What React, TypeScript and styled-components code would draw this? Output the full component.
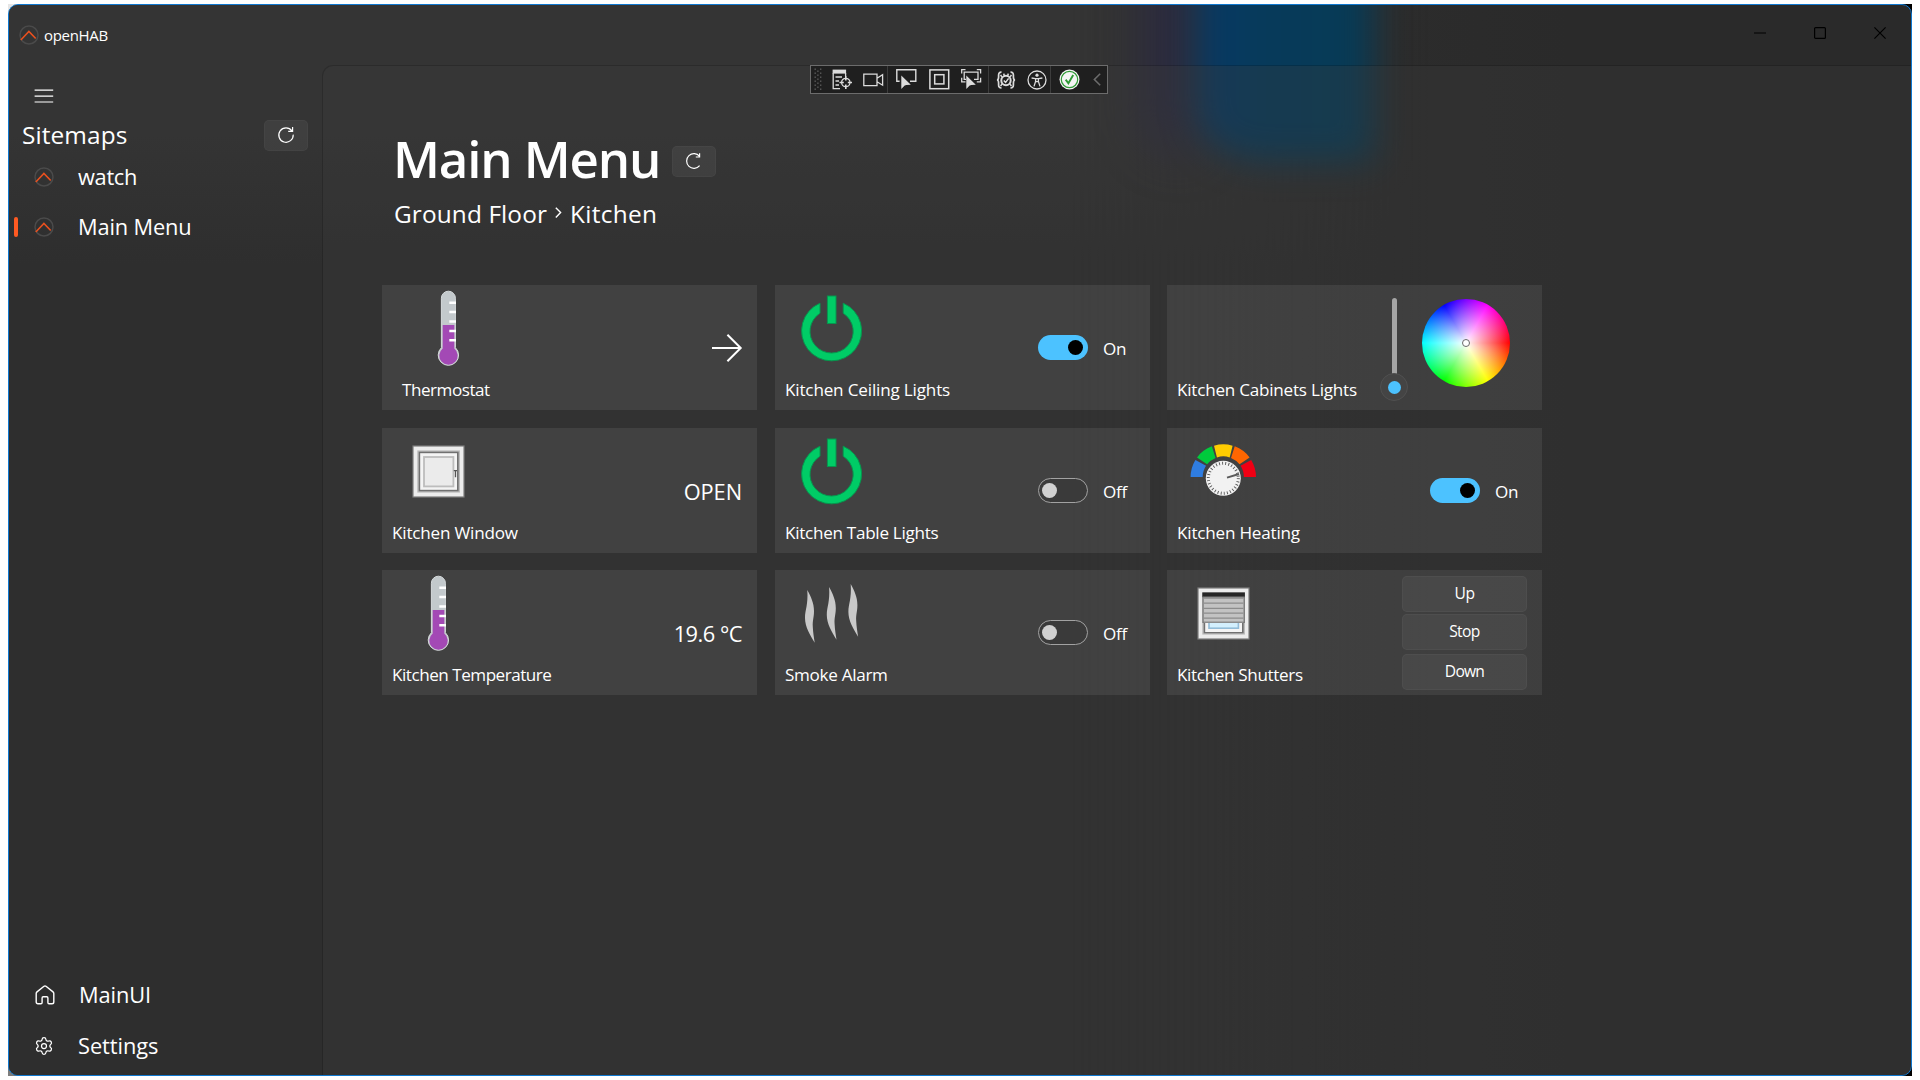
import React from "react";
import styled, { createGlobalStyle } from "styled-components";
import { Settings } from "lucide-react";

const GlobalStyle = createGlobalStyle`
  * { box-sizing: border-box; }
  body { margin: 0; background: #fff; font-family: "Open Sans", "Noto Sans", sans-serif; color: #fff; overflow: hidden; }
  svg { display: block; flex: none; }
`;

/* ---------- window frame ---------- */

const Desktop = styled.div`
  height: 1080px;
  padding: 4px 8px;
`;

const Backdrop = styled.div`
  height: 1072px;
  background:
    linear-gradient(#000, #000) right / 50% 100% no-repeat,
    linear-gradient(#e6e6e6 50%, #7d7d7d 50%);
`;

const Window = styled.div`
  position: relative;
  height: 1072px;
  border: 1px solid #0f78d0;
  border-radius: 10px;
  overflow: hidden;
  display: flex;
  flex-direction: column;
  isolation: isolate;
  background: linear-gradient(90deg, #2e2e2e 0, #2e2e2e 1200px, #2a2a2a 1560px, #2a2a2a 100%);

  &::before {
    content: "";
    position: absolute;
    z-index: -2;
    inset: 0;
    background: linear-gradient(#343434 0, #343434 130px, #2e2e2e 260px, #2e2e2e 100%);
    -webkit-mask-image: linear-gradient(90deg, #000 0, #000 1060px, transparent 1420px);
    mask-image: linear-gradient(90deg, #000 0, #000 1060px, transparent 1420px);
  }
`;

const Glow = styled.div<{ $x: number; $y: number; $w: number; $h: number; $blur: number; $color: string }>`
  position: absolute;
  z-index: -1;
  left: ${(p) => p.$x}px;
  top: ${(p) => p.$y}px;
  width: ${(p) => p.$w}px;
  height: ${(p) => p.$h}px;
  border-bottom-left-radius: 70px 50px;
  background: ${(p) => p.$color};
  filter: blur(${(p) => p.$blur}px);
`;

const TitleBar = styled.header`
  height: 60px;
  flex: none;
  display: flex;
  align-items: center;
  padding: 0 1px 0 10px;
`;

const AppTitle = styled.span`
  flex: 1;
  margin-left: 5px;
  font-size: 15px;
  line-height: 20px;
  letter-spacing: -0.31px;
`;

const CaptionButton = styled.div`
  width: 60px;
  height: 60px;
  padding-bottom: 4px;
  display: flex;
  align-items: center;
  justify-content: center;
`;

const Body = styled.div`
  flex: 1;
  min-height: 0;
  display: flex;
`;

/* ---------- navigation ---------- */

const Nav = styled.nav`
  width: 313px;
  flex: none;
  display: flex;
  flex-direction: column;
  padding-bottom: 4px;
`;

const MenuToggle = styled.div`
  height: 55px;
  padding: 24px 0 0 25px;
`;

const NavHeader = styled.div`
  height: 31px;
  margin-bottom: 1px;
  padding: 0 14px 0 13px;
  display: flex;
  align-items: center;
  justify-content: space-between;
`;

const NavTitle = styled.span`
  font-size: 24.4px;
  line-height: 32px;
  letter-spacing: 0.1px;
  padding-bottom: 2px;
`;

const NavItem = styled.div<{ $selected?: boolean; $height?: number; $nudge?: number }>`
  height: ${(p) => p.$height ?? 50}px;
  display: flex;
  align-items: center;
  padding-left: ${(p) => 5 + (p.$nudge ?? 0)}px;

  &::before {
    content: "";
    width: 4px;
    height: 20px;
    margin-right: 16px;
    border-radius: 2px;
    background: ${(p) => (p.$selected ? "#ff5a22" : "transparent")};
  }
`;

const NavLabel = styled.span<{ $track?: number }>`
  margin-left: 24px;
  font-size: 21.8px;
  line-height: 32px;
  letter-spacing: ${(p) => p.$track ?? 0}px;
`;

const Spacer = styled.div`
  flex: 1;
`;

const RefreshButton = styled.div<{ $drop?: number }>`
  width: 44px;
  height: 31px;
  margin-top: ${(p) => p.$drop ?? 0}px;
  padding-bottom: 2px;
  display: flex;
  align-items: center;
  justify-content: center;
  border-radius: 5px;
  background: rgba(255, 255, 255, 0.055);
  border: 1px solid rgba(255, 255, 255, 0.03);
`;

/* ---------- page ---------- */

const Page = styled.main`
  flex: 1;
  border: solid rgba(0, 0, 0, 0.16);
  border-width: 1px 0 0 1px;
  border-top-left-radius: 11px;
  background: rgba(58, 58, 58, 0.3);
  background-clip: padding-box;
  padding: 62px 0 0 59px;
`;

const HeadingRow = styled.div`
  height: 60px;
  padding-left: 11px;
  display: flex;
  align-items: center;
  gap: 12px;
`;

const Heading = styled.h1`
  margin: 0;
  font-size: 51px;
  font-weight: 600;
  line-height: 60px;
  letter-spacing: -1.15px;
`;

const Breadcrumb = styled.div`
  margin-top: 9px;
  padding-left: 12px;
  height: 34px;
  display: flex;
  align-items: center;
  gap: 8px;

  svg { margin-bottom: 2px; }
`;

const Crumb = styled.span<{ $track: number }>`
  font-size: 24.4px;
  line-height: 34px;
  letter-spacing: ${(p) => p.$track}px;
`;

const Tiles = styled.div`
  margin-top: 54px;
  display: grid;
  grid-template-columns: 393px 392px 375px;
  grid-template-rows: 143px 142px 125px;
`;

const Tile = styled.section`
  width: 375px;
  height: 125px;
  display: flex;
  background: rgba(255, 255, 255, 0.075);
`;

const TileInfo = styled.div<{ $inset?: number }>`
  width: 200px;
  flex: none;
  padding-left: ${(p) => p.$inset ?? 0}px;
`;

const TileArt = styled.div`
  height: 93px;
`;

const TileLabel = styled.div<{ $track: number }>`
  padding-left: 10px;
  font-size: 17.1px;
  line-height: 24px;
  white-space: nowrap;
  letter-spacing: ${(p) => p.$track}px;
`;

const TileControl = styled.div`
  flex: 1;
  display: flex;
  align-items: center;
  justify-content: flex-end;
`;

const ReadOut = styled.span<{ $track: number }>`
  padding: 2px 15px 0 0;
  font-size: 21.8px;
  line-height: 32px;
  letter-spacing: ${(p) => p.$track}px;
`;

const SwitchBox = styled.div`
  width: 112px;
  display: flex;
  align-items: center;
`;

const Track = styled.div<{ $on: boolean }>`
  width: 50px;
  height: 25px;
  padding: 0 ${(p) => (p.$on ? 5 : 3)}px;
  display: flex;
  align-items: center;
  justify-content: ${(p) => (p.$on ? "flex-end" : "flex-start")};
  border-radius: 13px;
  border: ${(p) => (p.$on ? "0" : "1px solid #a2a2a2")};
  background: ${(p) => (p.$on ? "#4cc2ff" : "#3a3a3a")};

  &::after {
    content: "";
    width: 15px;
    height: 15px;
    border-radius: 50%;
    background: ${(p) => (p.$on ? "#000" : "#d0d0d0")};
  }
`;

const SwitchText = styled.span`
  margin-left: 15px;
  padding-top: 2px;
  font-size: 17.1px;
  line-height: 24px;
  letter-spacing: -0.3px;
`;

const Slider = styled.div`
  width: 28px;
  height: 125px;
  padding-top: 13px;
  display: flex;
  flex-direction: column;
  align-items: center;
`;

const SliderRail = styled.div`
  width: 5px;
  height: 76px;
  border-radius: 3px 3px 0 0;
  background: #a5a5a5;
`;

const SliderThumb = styled.div`
  width: 28px;
  height: 28px;
  margin-top: -1px;
  display: flex;
  align-items: center;
  justify-content: center;
  border-radius: 50%;
  background: #444;
  border: 1px solid #505050;

  &::after {
    content: "";
    width: 13px;
    height: 13px;
    border-radius: 50%;
    background: #4cc2ff;
  }
`;

const Wheel = styled.div`
  width: 88px;
  height: 88px;
  margin: 0 32px 9px 14px;
  display: flex;
  align-items: center;
  justify-content: center;
  border-radius: 50%;
  background:
    radial-gradient(circle closest-side, #fff 0, rgba(255, 255, 255, 0) 100%),
    conic-gradient(from 90deg, #f00, #ff0, #0f0, #0ff, #00f, #f0f, #f00);

  &::after {
    content: "";
    width: 6px;
    height: 6px;
    border-radius: 50%;
    border: 1.5px solid #6a6a6a;
    background: #fff;
  }
`;

const Buttons = styled.div`
  width: 140px;
  height: 125px;
  padding: 6px 15px 0 0;
`;

const TileButton = styled.div<{ $gap?: number; $track: number }>`
  width: 125px;
  height: 36px;
  margin-bottom: ${(p) => p.$gap ?? 0}px;
  border-radius: 5px;
  border: 1px solid rgba(255, 255, 255, 0.035);
  background: rgba(255, 255, 255, 0.05);
  text-align: center;
  font-size: 15.6px;
  line-height: 33px;
  letter-spacing: ${(p) => p.$track}px;
`;

/* ---------- debug toolbar ---------- */

const DebugBar = styled.div`
  position: absolute;
  left: 801px;
  top: 60px;
  width: 298px;
  height: 29px;
  display: flex;
  align-items: center;
  border: 1px solid #6c6c6c;
  background: #1f1f1f;
`;

const DebugSlot = styled.div<{ $w: number; $line?: boolean }>`
  width: ${(p) => p.$w}px;
  height: 27px;
  display: flex;
  align-items: center;
  justify-content: center;
  border-right: ${(p) => (p.$line ? "1px solid #3d3d3d" : "0")};
`;

/* ---------- drawings ---------- */

const Logo = () => (
  <svg width="20" height="20" viewBox="0 0 20 20" fill="none">
    <circle cx="10" cy="10" r="9" stroke="#4a4a4a" strokeWidth="1.5" />
    <path d="M1.8 15 L9.9 6.5 L16.7 13.5" stroke="#e8501f" strokeWidth="1.6" />
  </svg>
);

const RefreshIcon = ({ clipped }: { clipped?: boolean }) => (
  <svg width="18" height="18" viewBox="0 0 18 18" fill="none" stroke="#fff" strokeWidth="1.2">
    {clipped ? (
      <path d="M14.6 4.4 A7.3 7.3 0 1 0 14.6 13.6 M14.6 1.2 V5 H10.8" />
    ) : (
      <path d="M14.9 4.9 A7.2 7.2 0 1 0 16.2 8.6 M15.6 1 V5.4 H11.2" />
    )}
  </svg>
);

const Thermometer = () => (
  <svg width="120" height="92" viewBox="0 0 120 92">
    <path
      d="M49.4 13.2 a7 7 0 0 1 14 0 V62.7 a10.2 10.2 0 1 1 -14 0 Z"
      fill="#c3c9cc"
      stroke="#d6dadc"
      strokeWidth="1"
    />
    <path d="M50.7 40 H62.3 V63.4 a9.2 9.2 0 1 1 -11.6 0 Z" fill="#a349b5" />
    <path d="M57.3 17.8 H64 M57.3 27.1 H64 M57.3 36.6 H64 M57.3 45.9 H64 M57.3 55.2 H64" stroke="#fff" strokeWidth="2.5" />
  </svg>
);

const Power = () => (
  <svg width="120" height="92" viewBox="0 0 120 92" fill="#00cc66" stroke="#06964e" strokeWidth="1">
    <rect x="52.4" y="11" width="8.6" height="27.5" />
    <path d="M45 18.2 A30 30 0 1 0 68.2 18.2 V28.2 A21.6 21.6 0 1 1 45 28.2 Z" />
  </svg>
);

const WindowFrame = ({ children }: { children: React.ReactNode }) => (
  <svg width="120" height="92" viewBox="0 0 120 92">
    <rect x="31" y="18" width="51" height="51" fill="#ececec" stroke="#7c7c7c" strokeWidth="1.2" />
    {children}
  </svg>
);

const WindowArt = () => (
  <WindowFrame>
    <rect x="35.3" y="22.4" width="42.6" height="42.2" fill="#b9b9b9" />
    <rect x="36.7" y="23.7" width="39.9" height="39.6" fill="#707070" />
    <rect x="38.2" y="25.2" width="36.8" height="36.6" fill="#f4f4f4" />
    <rect x="42" y="29" width="29.4" height="29.4" fill="#ebebeb" stroke="#bdbdbd" strokeWidth="1.8" />
    <path d="M71.8 42.6 H75 M73.5 42 V49.2" stroke="#555" strokeWidth="1.3" />
  </WindowFrame>
);

const ShutterArt = () => (
  <WindowFrame>
    <rect x="35.3" y="22.4" width="42.6" height="42.2" fill="#b9b9b9" />
    <rect x="36.7" y="23.7" width="39.9" height="39.6" fill="#707070" />
    <rect x="38.2" y="50" width="36.8" height="12" fill="#f4f4f4" />
    <rect x="42" y="50" width="29.4" height="8.2" fill="#d3effd" stroke="#93bcd8" strokeWidth="1.6" />
    <rect x="35.3" y="22.4" width="42.6" height="4.8" fill="#262626" />
    <rect x="36" y="27" width="41.2" height="25.4" fill="#c2c2c2" stroke="#6f6f6f" strokeWidth="1.2" />
    <path d="M36.5 28 H76.5 M36.5 33.2 H76.5 M36.5 38.3 H76.5 M36.5 43.2 H76.5 M36.5 48.2 H76.5 M36.5 52.4 H76.5" stroke="#8c8c8c" strokeWidth="1.3" />
  </WindowFrame>
);

const point = (r: number, deg: number) => {
  const a = (deg * Math.PI) / 180;
  return `${(56.3 + r * Math.cos(a)).toFixed(2)} ${(49 - r * Math.sin(a)).toFixed(2)}`;
};

const segments: [number, number, number, number, string][] = [
  [180, 148.5, 180, 147, "#2f7de1"],
  [143.5, 110.5, 142, 112, "#00cb3c"],
  [106.5, 73.5, 108, 72, "#ffcc00"],
  [69.5, 36.5, 68, 38, "#ff6600"],
  [31.5, 0, 33, 0, "#f00014"],
];

const Heating = () => (
  <svg width="120" height="92" viewBox="0 0 120 92">
    {segments.map(([a, b, c, d, color]) => (
      <path key={color} fill={color} d={`M${point(32.7, a)} A32.7 32.7 0 0 1 ${point(32.7, b)} L${point(20.6, d)} A20.6 20.6 0 0 0 ${point(20.6, c)} Z`} />
    ))}
    <circle cx="56.3" cy="50.3" r="17.5" fill="#f2f2f2" />
    <circle cx="56.3" cy="50.3" r="15" fill="none" stroke="#555" strokeWidth="3" strokeDasharray="0.9 2.24" />
    <path d="M60 49.6 L72 46" stroke="#5a5a5a" strokeWidth="2" />
  </svg>
);

const Smoke = () => {
  const wisp = "M32.3 20 C36 27 39 33 39 41 C39 48 37.4 50 37.8 57 C38.1 63 39 68 39.7 72.7 C35 65 30 57 30 48 C30 40 33.3 35 32.3 20 Z";
  return (
    <svg width="120" height="92" viewBox="0 0 120 92" fill="#c9c9c9">
      <path d={wisp} />
      <path d={wisp} transform="translate(21.8 -3)" />
      <path d={wisp} transform="translate(43.4 -6)" />
    </svg>
  );
};

const ArrowArt = () => (
  <svg width="46" height="30" viewBox="0 0 46 30" fill="none" stroke="#fff" strokeWidth="2">
    <path d="M1 15 H30 M16.4 1.7 L29.7 15 L16.4 28.3" />
  </svg>
);

const HomeIcon = () => (
  <svg width="20" height="20" viewBox="0 0 20 20" fill="none" stroke="#fff" strokeWidth="1.4" strokeLinejoin="round">
    <path d="M1.2 8.6 Q1.2 7.6 2 6.9 L9 1.3 Q10 0.6 11 1.3 L18 6.9 Q18.8 7.6 18.8 8.6 V17 Q18.8 18.8 17 18.8 H14 Q12.9 18.8 12.9 17.6 V13 Q12.9 11.8 11.8 11.8 H8.2 Q7.1 11.8 7.1 13 V17.6 Q7.1 18.8 6 18.8 H3 Q1.2 18.8 1.2 17 Z" />
  </svg>
);

const cursor = "M5.3 6.5 L5.3 20 L8.7 16.6 L10.4 16 L14.8 15.8 Z";
const light = "#dcdcdc";

const Grip = () => (
  <svg width="9" height="23" viewBox="0 0 9 23" fill="#5a5a5a">
    {[0, 1, 2, 3, 4, 5].map((i) => (
      <g key={i}>
        <rect x="0.5" y={i * 4 + 0.5} width="1.4" height="1.4" />
        <rect x="6" y={i * 4 + 0.5} width="1.4" height="1.4" />
        {i < 5 && <rect x="3.2" y={i * 4 + 2.5} width="1.4" height="1.4" />}
      </g>
    ))}
  </svg>
);

const LiveTree = () => (
  <svg width="21" height="21" viewBox="0 0 21 21" fill="none" stroke={light} strokeWidth="1.3">
    <rect x="0.6" y="0.6" width="13.5" height="4" fill={light} stroke="none" />
    <path d="M1.2 4 V19.6 H8 M3.5 8 H10 M3.5 12 H7 M3.5 16 H7 M13.6 4 V7" />
    <circle cx="13.8" cy="13.5" r="4.2" />
    <path d="M13.8 7 V11.5 M13.8 15.5 V20 M7.5 13.5 H11.8 M15.8 13.5 H20" strokeWidth="1.6" />
  </svg>
);

const Camera = () => (
  <svg width="21" height="14" viewBox="0 0 21 14" fill="none" stroke={light} strokeWidth="1.3">
    <path d="M0.8 1.2 H14 V12.6 H0.8 Z M14 5.2 L19.6 1.6 V12.2 L14 8.8" />
  </svg>
);

const SelectElement = () => (
  <svg width="21" height="21" viewBox="0 0 21 21" fill="none" stroke={light} strokeWidth="1.4">
    <path d="M3.6 12.3 H0.8 V0.8 H19.8 V12.3 H14" />
    <path d={cursor} fill={light} stroke="none" />
  </svg>
);

const Adorners = () => (
  <svg width="21" height="21" viewBox="0 0 21 21" fill="none" stroke={light} strokeWidth="1.5">
    <rect x="0.9" y="0.9" width="18.8" height="18.8" />
    <rect x="5.7" y="5.7" width="9.2" height="9.2" />
  </svg>
);

const TrackFocus = () => (
  <svg width="21" height="21" viewBox="0 0 21 21" fill="none" stroke={light} strokeWidth="1.3">
    <path d="M0.7 4.5 V0.7 H4.5 M15.8 0.7 H19.6 V4.5 M19.6 8.8 V12.8 H15.8 M4.5 12.8 H0.7 V8.8" />
    <path d="M5 10.4 H3.2 V3.2 H17 V10.4 H13" />
    <path d={cursor} fill={light} stroke="none" />
  </svg>
);

const Binding = () => (
  <svg width="20" height="18" viewBox="0 0 20 18" fill="none" stroke={light} strokeWidth="1.7">
    <path d="M5.5 1.2 Q2.6 1 2.6 4 V6 Q2.6 8.8 1 9 Q2.6 9.2 2.6 12 V14 Q2.6 17 5.5 16.8 M14.5 1.2 Q17.4 1 17.4 4 V6 Q17.4 8.8 19 9 Q17.4 9.2 17.4 12 V14 Q17.4 17 14.5 16.8" />
    <circle cx="10" cy="9.5" r="4.7" strokeWidth="2" />
    <path d="M7.8 9.4 L9.6 11.4 L12.6 7.4 M5.8 5.8 L4.6 3.8 M14.2 5.8 L15.4 3.8 M7.6 2.6 L8.6 5 M12.4 2.6 L11.4 5 M6 13 L4.6 15 M14 13 L15.4 15" strokeWidth="1.5" />
  </svg>
);

const Accessibility = () => (
  <svg width="20" height="20" viewBox="0 0 20 20" fill="none" stroke={light} strokeWidth="1.3">
    <circle cx="10" cy="10" r="9" />
    <circle cx="10" cy="5.2" r="1.6" fill={light} stroke="none" />
    <path d="M4.6 8 L8.5 8.6 H11.5 L15.4 8 M8.6 8.6 V11.5 L7 16.4 M11.4 8.6 V11.5 L13 16.4 M8.6 11.6 H11.4" />
  </svg>
);

const Passed = () => (
  <svg width="21" height="21" viewBox="0 0 21 21" fill="none">
    <circle cx="10.5" cy="10.5" r="10" fill="#f4f4f4" />
    <circle cx="10.5" cy="10.5" r="8.2" stroke="#2f9a36" strokeWidth="1.2" />
    <path d="M6.7 10.6 L9.4 14.2 L14.2 6" stroke="#2f9a36" strokeWidth="1.9" />
  </svg>
);

const Collapse = () => (
  <svg width="8" height="13" viewBox="0 0 8 13" fill="none" stroke="#6b6b6b" strokeWidth="1.6">
    <path d="M7.2 0.8 L1.4 6.5 L7.2 12.2" />
  </svg>
);

/* ---------- tiles ---------- */

const Toggle = ({ on }: { on: boolean }) => (
  <SwitchBox>
    <Track $on={on} />
    <SwitchText>{on ? "On" : "Off"}</SwitchText>
  </SwitchBox>
);

interface SitemapTile {
  label: string;
  track: number;
  inset?: number;
  art?: React.ReactNode;
  control: React.ReactNode;
}

const tiles: SitemapTile[] = [
  { label: "Thermostat", track: -0.48, inset: 10, art: <Thermometer />, control: <ArrowArt /> },
  { label: "Kitchen Ceiling Lights", track: -0.17, art: <Power />, control: <Toggle on /> },
  {
    label: "Kitchen Cabinets Lights",
    track: -0.23,
    control: (
      <>
        <Slider>
          <SliderRail />
          <SliderThumb />
        </Slider>
        <Wheel />
      </>
    ),
  },
  { label: "Kitchen Window", track: -0.2, art: <WindowArt />, control: <ReadOut $track={-0.06}>OPEN</ReadOut> },
  { label: "Kitchen Table Lights", track: -0.28, art: <Power />, control: <Toggle on={false} /> },
  { label: "Kitchen Heating", track: -0.2, art: <Heating />, control: <Toggle on /> },
  { label: "Kitchen Temperature", track: -0.48, art: <Thermometer />, control: <ReadOut $track={-0.5}>19.6 °C</ReadOut> },
  { label: "Smoke Alarm", track: -0.3, art: <Smoke />, control: <Toggle on={false} /> },
  {
    label: "Kitchen Shutters",
    track: -0.35,
    art: <ShutterArt />,
    control: (
      <Buttons>
        <TileButton $gap={2} $track={-0.37}>Up</TileButton>
        <TileButton $gap={4} $track={-0.6}>Stop</TileButton>
        <TileButton $track={-0.75}>Down</TileButton>
      </Buttons>
    ),
  },
];

export default function App() {
  return (
    <>
      <GlobalStyle />
      <Desktop>
        <Backdrop>
          <Window>
            <Glow $x={1135} $y={-60} $w={50} $h={210} $blur={22} $color="#2b2a40" />
            <Glow $x={1188} $y={-80} $w={176} $h={236} $blur={17} $color="linear-gradient(90deg, #06396a, #073a5b 30%, #073b55)" />
            <TitleBar>
              <Logo />
              <AppTitle>openHAB</AppTitle>
              <CaptionButton>
                <svg width="12" height="12" viewBox="0 0 12 12" stroke="#000" strokeWidth="1.2"><path d="M0 6 H12" /></svg>
              </CaptionButton>
              <CaptionButton>
                <svg width="12" height="12" viewBox="0 0 12 12" fill="none" stroke="#000" strokeWidth="1.2"><rect x="0.6" y="0.6" width="10.8" height="10.8" rx="1" /></svg>
              </CaptionButton>
              <CaptionButton>
                <svg width="12" height="12" viewBox="0 0 12 12" stroke="#000" strokeWidth="1.2"><path d="M0.4 0.4 L11.6 11.6 M11.6 0.4 L0.4 11.6" /></svg>
              </CaptionButton>
            </TitleBar>
            <Body>
              <Nav>
                <MenuToggle>
                  <svg width="20" height="14" viewBox="0 0 20 14" stroke="#fff" strokeWidth="1.2"><path d="M0.6 1.2 H19.2 M0.6 7.2 H19.2 M0.6 13 H19.2" /></svg>
                </MenuToggle>
                <NavHeader>
                  <NavTitle>Sitemaps</NavTitle>
                  <RefreshButton><RefreshIcon /></RefreshButton>
                </NavHeader>
                <NavItem>
                  <Logo />
                  <NavLabel $track={-0.3}>watch</NavLabel>
                </NavItem>
                <NavItem $selected>
                  <Logo />
                  <NavLabel $track={-0.14}>Main Menu</NavLabel>
                </NavItem>
                <Spacer />
                <NavItem $height={51} $nudge={1}>
                  <HomeIcon />
                  <NavLabel $track={-0.1}>MainUI</NavLabel>
                </NavItem>
                <NavItem $height={51}>
                  <Settings size={20} strokeWidth={1.5} />
                  <NavLabel $track={-0.06}>Settings</NavLabel>
                </NavItem>
              </Nav>
              <Page>
                <HeadingRow>
                  <Heading>Main Menu</Heading>
                  <RefreshButton $drop={7}><RefreshIcon clipped /></RefreshButton>
                </HeadingRow>
                <Breadcrumb>
                  <Crumb $track={0.12}>Ground Floor</Crumb>
                  <svg width="7" height="12" viewBox="0 0 7 12" fill="none" stroke="#fff" strokeWidth="1.4"><path d="M0.8 0.8 L5.6 5.6 L0.8 10.4" /></svg>
                  <Crumb $track={0.3}>Kitchen</Crumb>
                </Breadcrumb>
                <Tiles>
                  {tiles.map((tile) => (
                    <Tile key={tile.label}>
                      <TileInfo $inset={tile.inset}>
                        <TileArt>{tile.art}</TileArt>
                        <TileLabel $track={tile.track}>{tile.label}</TileLabel>
                      </TileInfo>
                      <TileControl>{tile.control}</TileControl>
                    </Tile>
                  ))}
                </Tiles>
              </Page>
            </Body>
            <DebugBar>
              <DebugSlot $w={15}><Grip /></DebugSlot>
              <DebugSlot $w={33}><LiveTree /></DebugSlot>
              <DebugSlot $w={29} $line><Camera /></DebugSlot>
              <DebugSlot $w={37}><SelectElement /></DebugSlot>
              <DebugSlot $w={29}><Adorners /></DebugSlot>
              <DebugSlot $w={35} $line><TrackFocus /></DebugSlot>
              <DebugSlot $w={34}><Binding /></DebugSlot>
              <DebugSlot $w={28} $line><Accessibility /></DebugSlot>
              <DebugSlot $w={37}><Passed /></DebugSlot>
              <DebugSlot $w={17}><Collapse /></DebugSlot>
            </DebugBar>
          </Window>
        </Backdrop>
      </Desktop>
    </>
  );
}
